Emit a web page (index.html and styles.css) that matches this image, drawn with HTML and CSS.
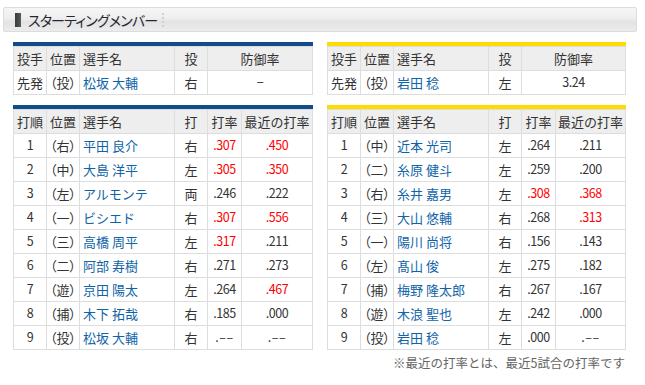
FILE: index.html
```html
<!DOCTYPE html>
<html lang="ja">
<head>
<meta charset="utf-8">
<link rel="stylesheet" href="styles.css">
</head>
<body>
<div class="title-box">
  <span class="title-bar"></span>
  <span class="title-text">スターティングメンバー</span>
  <span class="title-sep"></span>
</div>
<div class="teams">
  <div class="team team-home">
    <div class="bar"></div>
    <table class="tbl">
      <colgroup><col class="c1"><col class="c2"><col class="c3"><col class="c4"><col class="c56"></colgroup>
      <tr class="hd"><th class="l">投手</th><th class="l">位置</th><th class="l">選手名</th><th>投</th><th>防御率</th></tr>
      <tr><td class="l">先発</td><td class="l pos">（投）</td><td class="l name">松坂 大輔</td><td>右</td><td class="num">−</td></tr>
    </table>
    <div class="bar bar2"></div>
    <table class="tbl">
      <colgroup><col class="c1"><col class="c2"><col class="c3"><col class="c4"><col class="c5"><col class="c6"></colgroup>
      <tr class="hd"><th>打順</th><th class="l">位置</th><th class="l">選手名</th><th>打</th><th>打率</th><th>最近の打率</th></tr>
      <tr><td class="num">1</td><td class="l pos">（右）</td><td class="l name">平田 良介</td><td>右</td><td class="num red">.307</td><td class="num red">.450</td></tr>
      <tr><td class="num">2</td><td class="l pos">（中）</td><td class="l name">大島 洋平</td><td>左</td><td class="num red">.305</td><td class="num red">.350</td></tr>
      <tr><td class="num">3</td><td class="l pos">（左）</td><td class="l name">アルモンテ</td><td>両</td><td class="num">.246</td><td class="num">.222</td></tr>
      <tr><td class="num">4</td><td class="l pos">（一）</td><td class="l name">ビシエド</td><td>右</td><td class="num red">.307</td><td class="num red">.556</td></tr>
      <tr><td class="num">5</td><td class="l pos">（三）</td><td class="l name">高橋 周平</td><td>左</td><td class="num red">.317</td><td class="num">.211</td></tr>
      <tr><td class="num">6</td><td class="l pos">（二）</td><td class="l name">阿部 寿樹</td><td>右</td><td class="num">.271</td><td class="num">.273</td></tr>
      <tr><td class="num">7</td><td class="l pos">（遊）</td><td class="l name">京田 陽太</td><td>左</td><td class="num">.264</td><td class="num red">.467</td></tr>
      <tr><td class="num">8</td><td class="l pos">（捕）</td><td class="l name">木下 拓哉</td><td>右</td><td class="num">.185</td><td class="num">.000</td></tr>
      <tr><td class="num">9</td><td class="l pos">（投）</td><td class="l name">松坂 大輔</td><td>右</td><td class="num dash">.––</td><td class="num dash">.––</td></tr>
    </table>
  </div>
  <div class="team team-away">
    <div class="bar"></div>
    <table class="tbl">
      <colgroup><col class="c1"><col class="c2"><col class="c3"><col class="c4"><col class="c56"></colgroup>
      <tr class="hd"><th class="l">投手</th><th class="l">位置</th><th class="l">選手名</th><th>投</th><th>防御率</th></tr>
      <tr><td class="l">先発</td><td class="l pos">（投）</td><td class="l name">岩田 稔</td><td>左</td><td class="num">3.24</td></tr>
    </table>
    <div class="bar bar2"></div>
    <table class="tbl">
      <colgroup><col class="c1"><col class="c2"><col class="c3"><col class="c4"><col class="c5"><col class="c6"></colgroup>
      <tr class="hd"><th>打順</th><th class="l">位置</th><th class="l">選手名</th><th>打</th><th>打率</th><th>最近の打率</th></tr>
      <tr><td class="num">1</td><td class="l pos">（中）</td><td class="l name">近本 光司</td><td>左</td><td class="num">.264</td><td class="num">.211</td></tr>
      <tr><td class="num">2</td><td class="l pos">（二）</td><td class="l name">糸原 健斗</td><td>左</td><td class="num">.259</td><td class="num">.200</td></tr>
      <tr><td class="num">3</td><td class="l pos">（右）</td><td class="l name">糸井 嘉男</td><td>左</td><td class="num red">.308</td><td class="num red">.368</td></tr>
      <tr><td class="num">4</td><td class="l pos">（三）</td><td class="l name">大山 悠輔</td><td>右</td><td class="num">.268</td><td class="num red">.313</td></tr>
      <tr><td class="num">5</td><td class="l pos">（一）</td><td class="l name">陽川 尚将</td><td>右</td><td class="num">.156</td><td class="num">.143</td></tr>
      <tr><td class="num">6</td><td class="l pos">（左）</td><td class="l name">髙山 俊</td><td>左</td><td class="num">.275</td><td class="num">.182</td></tr>
      <tr><td class="num">7</td><td class="l pos">（捕）</td><td class="l name">梅野 隆太郎</td><td>右</td><td class="num">.267</td><td class="num">.167</td></tr>
      <tr><td class="num">8</td><td class="l pos">（遊）</td><td class="l name">木浪 聖也</td><td>左</td><td class="num">.242</td><td class="num">.000</td></tr>
      <tr><td class="num">9</td><td class="l pos">（投）</td><td class="l name">岩田 稔</td><td>左</td><td class="num">.000</td><td class="num dash">.––</td></tr>
    </table>
    <p class="note">※最近の打率とは、最近5試合の打率です</p>
  </div>
</div>
</body>
</html>
```
FILE: styles.css
```css
html, body {
  margin: 0;
  padding: 0;
  background: #fff;
}
body {
  font-family: "Noto Sans CJK JP", "Noto Sans", sans-serif;
  color: #333;
  font-size: 13px;
}
.title-box {
  margin: 7px 0 0 3px;
  width: 632px;
  height: 23px;
  border: 1px solid #dcdcdc;
  border-radius: 2px;
  background: linear-gradient(#f6f6f6 0%, #eeeeee 45%, #e3e3e3 60%, #ececec 100%);
  display: flex;
  align-items: center;
}
.title-bar {
  width: 6px;
  height: 14px;
  margin-left: 11px;
  background: linear-gradient(90deg, #3a3a3a, #5a5a5a);
}
.title-text {
  margin-left: 7px;
  font-size: 14px;
  color: #2a2430;
  font-feature-settings: "palt";
  letter-spacing: -0.8px;
  line-height: 1;
}
.title-sep {
  width: 0;
  height: 14px;
  margin-left: 5px;
  border-left: 2px dotted #d0d0d0;
}
.teams {
  display: flex;
  gap: 14px;
  margin: 10px 0 0 13px;
}
.team {
  width: 300px;
}
.team-away {
  width: 299px;
}
.bar {
  height: 4px;
  background: #134c8b;
}
.team-away .bar {
  background: #ffdc00;
}
.bar2 {
  margin-top: 10px;
}
.tbl {
  width: 100%;
  border-collapse: collapse;
  table-layout: fixed;
}
.c1, .c2, .c4 { width: 33px; }
.c3 { width: 95px; }
.c5 { width: 34px; }
.c6 { width: auto; }
.c56 { width: auto; }
.tbl th, .tbl td {
  border: 1px solid #dddddd;
  height: 23px;
  padding: 0;
  text-align: center;
  font-weight: normal;
  white-space: nowrap;
  line-height: 1;
}
.tbl th {
  background: #eeeeee;
  color: #333;
  font-size: 13px;
}
.tbl th.l, .tbl td.l {
  text-align: left;
  padding-left: 3px;
}
.pos {
  font-feature-settings: "palt";
}
.name {
  color: #0f64a8;
}
.num {
  font-size: 12.5px;
  letter-spacing: -0.4px;
}
.dash {
  letter-spacing: 0.5px;
}
.red {
  color: #ff0000;
}
.note {
  margin: 5px 1px 0 0;
  text-align: right;
  font-size: 12.5px;
  color: #666;
  line-height: 16px;
}
```
